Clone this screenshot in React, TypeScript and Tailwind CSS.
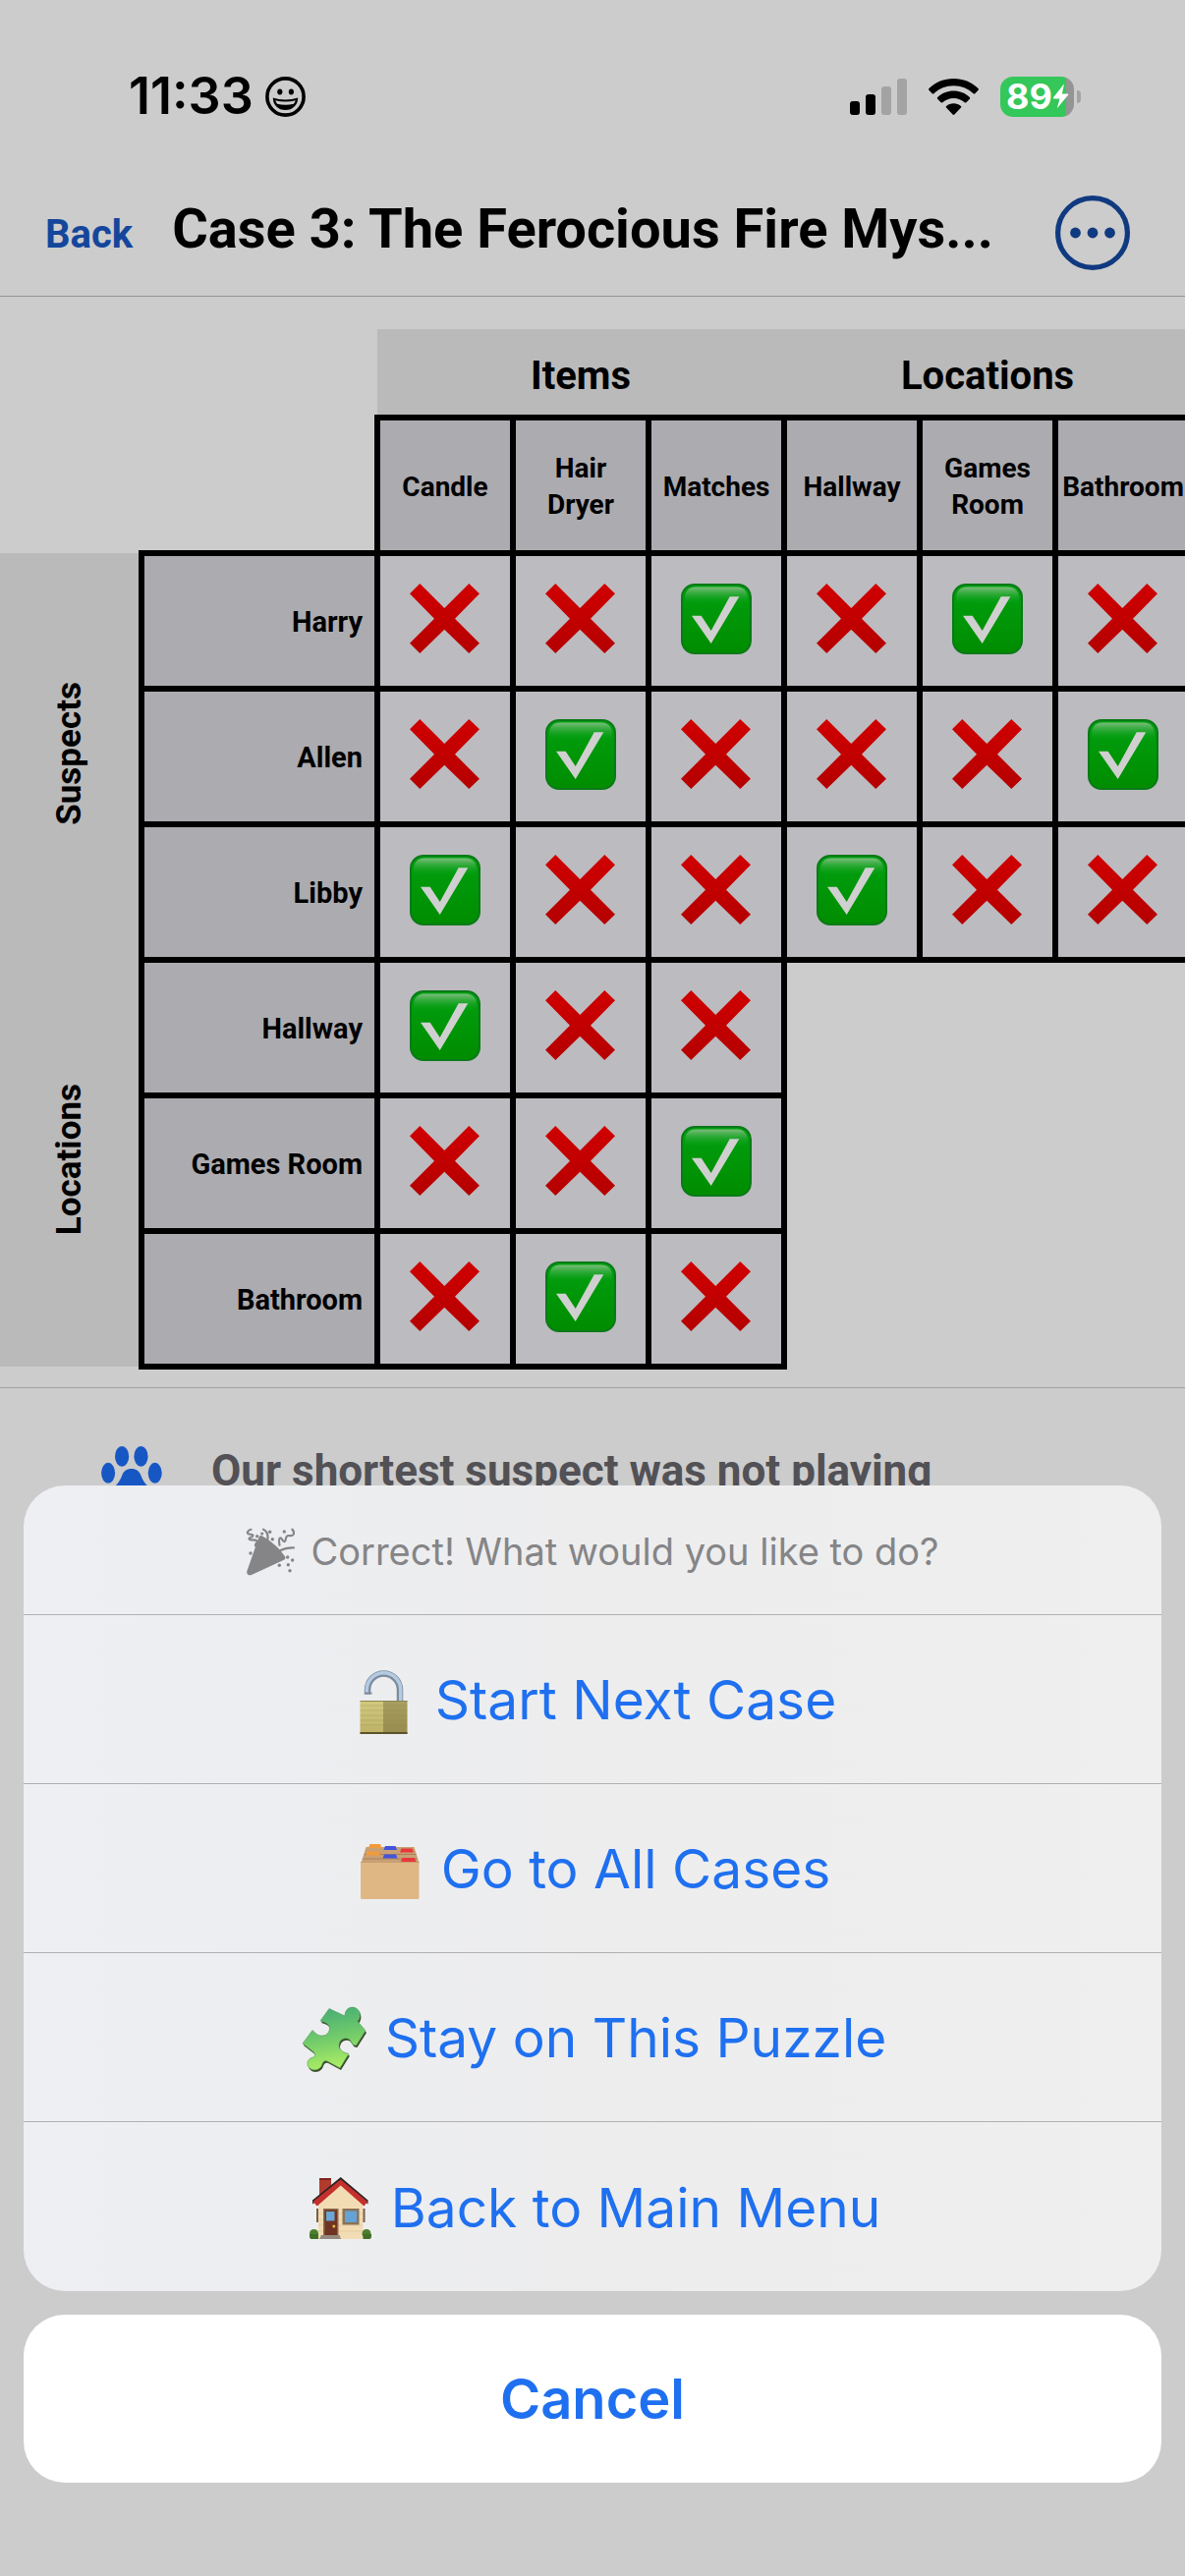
import React from 'react';

type Mark = 'x' | 'check';

interface GridRow {
  name: string;
  marks: Mark[];
}

interface RowGroup {
  title: string;
  rows: GridRow[];
}

interface SheetAction {
  label: string;
  icon: React.ReactNode;
}

const columnGroups = [
  { title: 'Items', columns: ['Candle', 'Hair Dryer', 'Matches'] },
  { title: 'Locations', columns: ['Hallway', 'Games Room', 'Bathroom'] },
];

const columns = columnGroups.flatMap((group) => group.columns);

const rowGroups: RowGroup[] = [
  {
    title: 'Suspects',
    rows: [
      { name: 'Harry', marks: ['x', 'x', 'check', 'x', 'check', 'x'] },
      { name: 'Allen', marks: ['x', 'check', 'x', 'x', 'x', 'check'] },
      { name: 'Libby', marks: ['check', 'x', 'x', 'check', 'x', 'x'] },
    ],
  },
  {
    title: 'Locations',
    rows: [
      { name: 'Hallway', marks: ['check', 'x', 'x'] },
      { name: 'Games Room', marks: ['x', 'x', 'check'] },
      { name: 'Bathroom', marks: ['x', 'check', 'x'] },
    ],
  },
];

const actions: SheetAction[] = [
  { label: 'Start Next Case', icon: <LockIcon /> },
  { label: 'Go to All Cases', icon: <FolderIcon /> },
  { label: 'Stay on This Puzzle', icon: <PuzzleIcon /> },
  { label: 'Back to Main Menu', icon: <HouseIcon /> },
];

function SmileyIcon() {
  return (
    <svg viewBox="0 0 41 41" className="size-[41px]" fill="none">
      <circle cx="20.5" cy="20.5" r="18.6" stroke="#000" strokeWidth="3.6" />
      <ellipse cx="14.8" cy="15.6" rx="2.6" ry="3" fill="#000" />
      <ellipse cx="26.4" cy="15.6" rx="2.6" ry="3" fill="#000" />
      <path d="M7.8 21.5c8 2.6 17.4 2.6 25.4 0 0 7.5-5.4 12.6-12.7 12.6S7.8 29 7.8 21.5z" fill="#000" />
      <path d="M10.3 24.2c6.5 1.7 13.9 1.7 20.4 0-.4 1.5-1 2.6-1.8 3.6-5.3 1.4-11.5 1.4-16.8 0-.8-1-1.4-2.1-1.8-3.6z" fill="#ccc" />
    </svg>
  );
}

function SignalIcon() {
  return (
    <svg viewBox="0 0 58 37" className="h-[37px] w-[58px]">
      <rect x="0" y="23" width="10" height="14" rx="3" />
      <rect x="16" y="16" width="10" height="21" rx="3" />
      <rect x="32" y="8" width="10" height="29" rx="3" fill="#a3a3a3" />
      <rect x="48" y="0" width="10" height="37" rx="3" fill="#a3a3a3" />
    </svg>
  );
}

function WifiIcon() {
  return (
    <svg viewBox="0 0 51 37" className="h-[37px] w-[51px]">
      <path d="M25.5 0C35.2 0 44 3.7 50.5 9.9c.6.5.6 1.3.1 1.8l-3.3 3.5c-.5.5-1.2.5-1.7 0C40.3 10.3 33.2 7.3 25.5 7.3S10.7 10.3 5.4 15.2c-.5.5-1.2.5-1.7 0L.4 11.7c-.5-.5-.5-1.3.1-1.8C7 3.7 15.8 0 25.5 0z" />
      <path d="M25.5 12.6c6.3 0 12 2.4 16.3 6.3.5.5.5 1.3 0 1.8l-3.4 3.5c-.5.5-1.2.5-1.7 0-3-2.7-6.9-4.3-11.2-4.3s-8.2 1.6-11.2 4.3c-.5.5-1.2.5-1.7 0l-3.4-3.5c-.5-.5-.5-1.3 0-1.8 4.3-3.9 10-6.3 16.3-6.3z" />
      <path d="M25.5 25.2c2.8 0 5.4 1 7.4 2.7.5.5.6 1.2.1 1.7l-6.6 7c-.5.5-1.3.5-1.8 0l-6.6-7c-.5-.5-.4-1.2.1-1.7 2-1.7 4.6-2.7 7.4-2.7z" />
    </svg>
  );
}

function Battery() {
  return (
    <div className="flex items-center gap-[3px]">
      <div className="flex h-[41px] w-[75px] items-center rounded-[13px] bg-linear-to-r from-[#34c759] from-90% to-[#949494] to-90% pl-[6px]">
        <span className="font-['Inter',sans-serif] text-[36px] leading-[41px] font-bold text-white">89</span>
        <svg viewBox="0 0 17 26" className="h-[26px] w-[17px] shrink-0">
          <path d="M12 .3 1 14.3c-.4.6-.1 1.2.6 1.2h5.9L4.8 25.3 16 11.8c.5-.7.2-1.3-.6-1.3H9.900z" fill="#fff" />
        </svg>
      </div>
      <div className="h-[13px] w-[4px] rounded-r-full bg-[#a3a3a3]" />
    </div>
  );
}

function MoreIcon() {
  return (
    <svg viewBox="0 0 76 76" className="size-[76px]" fill="#103a80">
      <circle cx="38" cy="38" r="35.4" fill="none" stroke="#103a80" strokeWidth="5.2" />
      <circle cx="20.5" cy="38" r="5.4" />
      <circle cx="38" cy="38" r="5.4" />
      <circle cx="55.5" cy="38" r="5.4" />
    </svg>
  );
}

function CrossMark() {
  return (
    <svg viewBox="0 0 72 72" className="size-[72px]">
      <defs>
        <linearGradient id="cross" x1="0" y1="0" x2="0" y2="1">
          <stop offset="0" stopColor="#d00000" />
          <stop offset="1" stopColor="#b40000" />
        </linearGradient>
      </defs>
      <path
        d="M0 10.3 10.3 0l25 25 25-25L71 10.3 46 35.7l25 25L60.3 71l-25-24.3L10.3 71 0 60.7l25-25z"
        fill="url(#cross)"
      />
    </svg>
  );
}

function CheckMark() {
  return (
    <svg viewBox="0 0 72 72" className="size-[72px]">
      <defs>
        <linearGradient id="tile" x1="0" y1="0" x2="0" y2="1">
          <stop offset="0" stopColor="#00a010" />
          <stop offset="1" stopColor="#008c00" />
        </linearGradient>
        <linearGradient id="gloss" x1="0" y1="0" x2="0" y2="1">
          <stop offset="0" stopColor="#7dbd7d" />
          <stop offset="1" stopColor="#00a010" stopOpacity="0" />
        </linearGradient>
      </defs>
      <rect x="1" y="1" width="70" height="70" rx="13" fill="url(#tile)" stroke="#0a7a17" strokeWidth="2" />
      <path d="M4 22V15C4 8 8 3.5 15 3.5h42c7 0 11 4.5 11 11.5v7z" fill="url(#gloss)" />
      <path d="M11 32.7h9.7L30.7 48l19-34.7h9.6L30.7 61z" fill="#d0d0d0" />
    </svg>
  );
}

function PawIcon() {
  return (
    <svg viewBox="0 0 62 58" className="h-[58px] w-[62px]" fill="#1657c4">
      <ellipse cx="7.1" cy="27.3" rx="7" ry="10.5" />
      <ellipse cx="21.1" cy="10.4" rx="7.1" ry="10.4" />
      <ellipse cx="40.5" cy="10.4" rx="7.1" ry="10.4" />
      <ellipse cx="54.7" cy="27.3" rx="7" ry="10.5" />
      <path d="M30.8 23c5 0 8 2.5 9.5 6.5 1.7 4.5 3.7 8 7 11 6 6 4 16-4.5 16-4 0-8-2-12-2s-8 2-12 2c-8.5 0-10.5-10-4.5-16 3.3-3 5.3-6.5 7-11 1.5-4 4.5-6.5 9.5-6.5z" />
    </svg>
  );
}

function PopperIcon() {
  return (
    <svg viewBox="0 0 50 50" className="size-[50px]" fill="#858587">
      <path d="M13.5 10.500c.8-1.800 2.600-2 4-.8 8.500 5 17 12 22.500 20.500.9 1.500.5 2.800-1 3.500L6 49c-3 1.200-5.500-1-4.600-4z" />
      <g fill="none" stroke="#858587" strokeWidth="2.2" strokeLinecap="round" strokeLinejoin="round">
        <path d="M35 24.3c4-2.2 8.5-3.2 14-3" />
        <path d="M18 2.7c3.5 1.5 5 5 4.5 10" />
        <path d="M5.5 2.800C2.500 3.500 1 6 2.500 7.200 4 8.300 7.500 7 7.500 9c0 2-4.500 1.500-4 3.500.5 1.800 6 0 8 1.800 1.500 1.500-2 2.500-1.500 5" />
        <path d="M34.500 18.700c-.5-3-1-6.700.5-7.200 2-.6 2.500 4 4.500 3.700 2-.5.5-5 3-6 2-.8 4.500 1 6-1.200 1-1.700.5-3.500-1-5.300" />
      </g>
      <circle cx="11.7" cy="9.7" r="1.6" />
      <circle cx="16.7" cy="7" r="1.6" />
      <circle cx="24.7" cy="5.3" r="1.7" />
      <circle cx="27.3" cy="12.7" r="1.7" />
      <circle cx="39.3" cy="5" r="1.7" />
      <circle cx="5" cy="27" r="1.7" />
      <circle cx="42.7" cy="31" r="1.7" />
      <circle cx="47.7" cy="34" r="1.7" />
      <circle cx="34.3" cy="39.3" r="1.7" />
      <circle cx="43.3" cy="38.7" r="1.7" />
      <circle cx="45" cy="44.7" r="1.7" />
    </svg>
  );
}

function LockIcon() {
  return (
    <svg viewBox="0 0 72 72" className="size-[72px]">
      <defs>
        <linearGradient id="brassLeft" x1="0" y1="0" x2="0" y2="1">
          <stop offset="0" stopColor="#d3ca80" />
          <stop offset="1" stopColor="#bdb166" />
        </linearGradient>
        <linearGradient id="brassRight" x1="0" y1="0" x2="0" y2="1">
          <stop offset="0" stopColor="#a89f60" />
          <stop offset="1" stopColor="#978b4d" />
        </linearGradient>
      </defs>
      <path d="M19 29.5V25a16.500 16.500 0 0 1 33 0v12" fill="none" stroke="#7b8b9c" strokeWidth="6.500" />
      <path d="M18.300 29V25a17.200 17.200 0 0 1 34.400 0v12" fill="none" stroke="#b4cbe2" strokeWidth="3.500" />
      <path d="M16 28.500h7.500" stroke="#7b8b9c" strokeWidth="2" />
      <rect x="11.5" y="36" width="24.5" height="34" fill="url(#brassLeft)" />
      <rect x="35" y="36" width="24.5" height="34" fill="url(#brassRight)" />
      <path d="M11.5 41h48M11.5 46h48M11.5 51h48M11.5 56h48M11.5 61h48" stroke="#8f8446" strokeOpacity=".3" />
      <path d="M11.5 36.5h48" stroke="#8d8450" />
      <path d="M11.5 69h48" stroke="#5b522a" strokeWidth="2" />
    </svg>
  );
}

function FolderIcon() {
  return (
    <svg viewBox="0 0 72 72" className="size-[72px]">
      <path d="M11.5 13h49l5 16h-59z" fill="#c9a074" />
      <path d="M10 20.5h52.5M8.5 25h55" stroke="#a9825a" strokeWidth="1.2" />
      <path d="M14 14l1.5-4H26l1.5 4z" fill="#f29a3c" />
      <path d="M29.5 16l1.5-4h10.5l1.5 4z" fill="#4453dc" />
      <path d="M46 18.500l1.500-4h11l1.500 4z" fill="#e8363a" />
      <path d="M11.5 21.500l1.500-4h11.500l1.500 4z" fill="#f29a3c" />
      <path d="M28.5 24.500l1.500-4h12l1.500 4z" fill="#4453dc" />
      <path d="M47 28l1.500-4h12.500l1.500 4z" fill="#e8363a" />
      <path d="M6 28h59.500v36.500q0 1.500-1.500 1.500h-56.500q-1.500 0-1.500-1.500z" fill="#deb785" />
      <path d="M6 28.500h59.500" stroke="#c79e6e" />
    </svg>
  );
}

const puzzlePath =
  'M31 5.5 47 13C47 6 52 3 57 4.5 63 6.5 64 14 60 18.5L68 28 58.5 43C56 43 54.5 42 53.5 39.5 51.5 34.5 45 34.5 42 39 39 45 43 50 51 51.5L42 66 29 59C26 58 25 59.5 24 62 22 69 14 69 11 66 7 62 9 56 15 55 17 54 17 51.5 15 49.5L4 41 14 27.5 17 30.5C21 34 27.5 34 30 30 34 24 29.5 19.5 22 18z';

function PuzzleIcon() {
  return (
    <svg viewBox="0 0 72 72" className="size-[72px]">
      <defs>
        <linearGradient id="piece" x1="0.4" y1="0" x2="0.6" y2="1">
          <stop offset="0" stopColor="#45ad74" />
          <stop offset="0.5" stopColor="#74cc6a" />
          <stop offset="1" stopColor="#b3f264" />
        </linearGradient>
      </defs>
      <path d={puzzlePath} fill="#3a4a2c" transform="translate(1 2)" />
      <path d={puzzlePath} fill="url(#piece)" stroke="#4f9a52" strokeWidth="0.6" />
    </svg>
  );
}

function HouseIcon() {
  return (
    <svg viewBox="0 0 72 72" className="size-[72px]">
      <rect x="15" y="6" width="12" height="20" fill="#b23a2e" />
      <rect x="15" y="6" width="12" height="2" fill="#7d241d" />
      <path d="M12 37h3v14h-3zM58.5 37h3v14h-3z" fill="#7a5f48" />
      <path d="M14 68V28L36.7 9 59.5 28v40z" fill="#f2dcb4" />
      <path d="M14 42h45M14 48h45M14 54h45M14 60h45" stroke="#e3c999" strokeWidth=".8" />
      <path d="M36.7 5 64.5 28.5v4L36.7 9.5 8 32.5v-4z" fill="#2d2524" />
      <path d="M36.7 7.5 64 30l-3.5 4.5-23.800-21-24 21L8.500 30z" fill="#c5302c" />
      <rect x="19" y="37" width="15.5" height="28" fill="#8b6a4c" />
      <rect x="20.5" y="38.5" width="12.5" height="26" fill="#6f3323" />
      <rect x="22" y="40" width="8.5" height="9.5" fill="#6aa7d6" />
      <circle cx="29.8" cy="55" r="1.5" fill="#e9b84a" />
      <rect x="38.5" y="37" width="17" height="16.5" fill="#8b7258" />
      <rect x="41" y="39.5" width="12" height="11.5" fill="#64a3d6" />
      <circle cx="9.5" cy="62.5" r="4.5" fill="#4c7f2d" />
      <circle cx="63" cy="62.5" r="4.5" fill="#4c7f2d" />
      <path d="M5 63h9v5H7q-2 0-2-3zM59.5 63H68v2q0 3-2 3h-6.5z" fill="#3f6f26" />
      <path d="M17 64h18.5l1.5 4H15z" fill="#93897f" />
    </svg>
  );
}

function StatusBar() {
  return (
    <div className="flex h-[176px] items-center justify-between pt-5 pr-[106px] pl-[131px]">
      <div className="flex items-center gap-3">
        <span className="font-['Inter',sans-serif] text-[52px] leading-none font-semibold">11:33</span>
        <SmileyIcon />
      </div>
      <div className="flex items-center gap-[22px]">
        <SignalIcon />
        <WifiIcon />
        <Battery />
      </div>
    </div>
  );
}

function NavBar() {
  return (
    <header className="flex h-[126px] items-center border-b border-[#929292] pr-14 pb-1 pl-[46px]">
      <button type="button" className="pt-1 text-[40px] leading-none font-bold text-[#14469c]">
        Back
      </button>
      <h1 className="ml-10 min-w-0 flex-1 pb-2 text-[56px] leading-none font-bold whitespace-nowrap">
        Case 3: The Ferocious Fire Mys...
      </h1>
      <button type="button" aria-label="More options">
        <MoreIcon />
      </button>
    </header>
  );
}

function LogicGrid() {
  return (
    <div className="overflow-hidden pt-[33px]">
      <table className="w-[1212px] table-fixed border-collapse">
        <colgroup>
          <col className="w-36" />
          <col className="w-60" />
          {columns.map((column) => (
            <col key={column} className="w-[138px]" />
          ))}
        </colgroup>
        <thead>
          <tr>
            <td colSpan={2} rowSpan={2} />
            {columnGroups.map((group) => (
              <th
                key={group.title}
                scope="colgroup"
                colSpan={group.columns.length}
                className="h-[90px] bg-[#bababa] p-0 pt-2 text-[40px] font-bold"
              >
                {group.title}
              </th>
            ))}
          </tr>
          <tr>
            {columns.map((column) => (
              <th
                key={column}
                scope="col"
                className="h-[138px] border-6 border-black bg-[#acabb0] px-1 pt-0.5 pb-0 text-[28px] leading-[37px] font-bold"
              >
                {column}
              </th>
            ))}
          </tr>
        </thead>
        {rowGroups.map((group) => (
          <tbody key={group.title}>
            {group.rows.map((row, index) => (
              <tr key={row.name}>
                {index === 0 && (
                  <th scope="rowgroup" rowSpan={group.rows.length} className="bg-[#bababa] p-0">
                    <span className="inline-block rotate-180 text-[35px] leading-none font-bold [writing-mode:vertical-rl]">
                      {group.title}
                    </span>
                  </th>
                )}
                <th
                  scope="row"
                  className="h-[138px] border-6 border-black bg-[#acabb0] pt-0.5 pr-3 pb-0 pl-0 text-right text-[29px] leading-[37px] font-bold"
                >
                  {row.name}
                </th>
                {row.marks.map((mark, column) => (
                  <td key={columns[column]} className="border-6 border-black bg-[#bcbbc0] p-0">
                    <button
                      type="button"
                      aria-label={`${row.name}, ${columns[column]}: ${mark === 'check' ? 'yes' : 'no'}`}
                      className="flex w-full items-center justify-center pb-1"
                    >
                      {mark === 'check' ? <CheckMark /> : <CrossMark />}
                    </button>
                  </td>
                ))}
              </tr>
            ))}
          </tbody>
        ))}
      </table>
    </div>
  );
}

function ActionSheet() {
  return (
    <div
      role="dialog"
      aria-label="Case solved"
      className="fixed inset-x-0 bottom-0 flex flex-col gap-6 px-6 pb-[95px] font-['Inter',sans-serif] text-[#1f70f0]"
    >
      <div className="divide-y divide-[#b0b0b3] overflow-hidden rounded-[42px] bg-linear-to-r from-[#edeff3] via-[#ededee] to-[#efefef]">
        <div className="flex h-[132px] items-center justify-center gap-4 pt-0.5">
          <PopperIcon />
          <p className="text-[38px] leading-none text-[#858587]">Correct! What would you like to do?</p>
        </div>
        {actions.map((action) => (
          <button
            key={action.label}
            type="button"
            className="flex h-[172px] w-full items-center justify-center gap-4 pt-0.5 text-[55px] leading-none"
          >
            {action.icon}
            <span>{action.label}</span>
          </button>
        ))}
      </div>
      <button type="button" className="h-[171px] rounded-[42px] bg-white text-[56px] leading-none font-semibold">
        Cancel
      </button>
    </div>
  );
}

export default function App() {
  return (
    <div className="min-h-screen bg-[#ccc] font-['Roboto','Liberation_Sans',sans-serif] text-black">
      <StatusBar />
      <NavBar />
      <main>
        <LogicGrid />
        <section className="mt-[18px] flex gap-[50px] border-t border-[#a0a0a0] pt-[59px] pr-12 pl-[103px]">
          <PawIcon />
          <p className="text-[44px] leading-[50px] font-bold text-[#525156]">
            Our shortest suspect was not playing
          </p>
        </section>
      </main>
      <ActionSheet />
    </div>
  );
}
